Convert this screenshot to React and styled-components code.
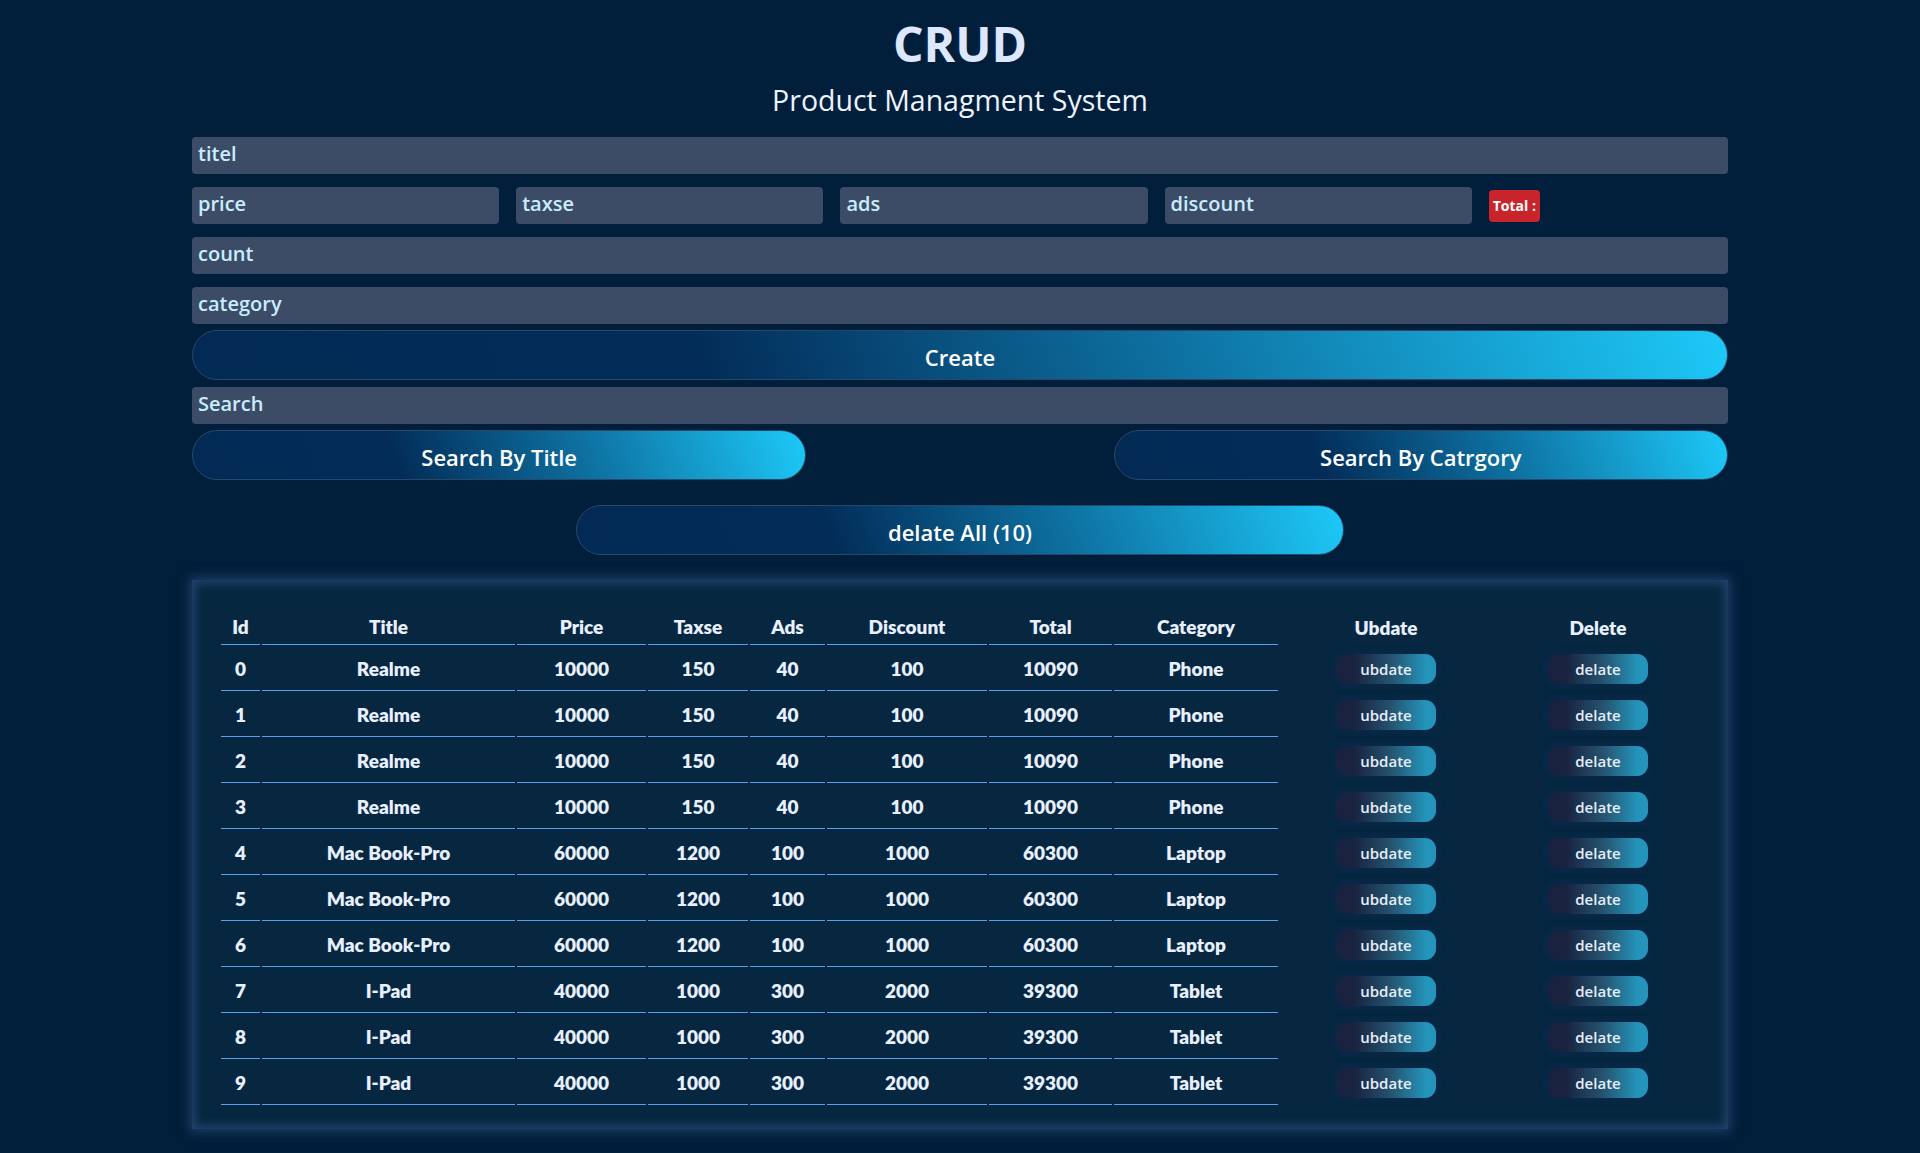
import styled, { createGlobalStyle } from "styled-components";

const GlobalStyle = createGlobalStyle`
html, body {
    margin: 0;
    padding: 0;
    background: #011f3b;
}
body {
    font-family: "Open Sans", "Noto Sans", sans-serif;
    color: #e6eeff;
}
* {
    box-sizing: border-box;
}
`;

const Page = styled.div`
width: 80%;
margin: 0 auto;
padding: 20px 0 24px;
`;

const Head = styled.div`
text-align: center;
h1 {
    margin: 0;
    font-size: 48px;
    line-height: 48px;
    font-weight: 700;
    color: #dde7ff;
}
h2 {
    margin: 18px 0 0;
    font-size: 28.5px;
    line-height: 28px;
    font-weight: 500;
    color: #eef3ff;
}
`;

const Form = styled.div`
margin-top: 23px;
display: flex;
flex-direction: column;
`;

const Field = styled.div`
height: 37px;
width: ${(p) => p.$w || "100%"};
flex-shrink: 0;
background: #3c4c66;
border-radius: 4px;
padding: 0 6px 4px;
display: flex;
align-items: center;
font-size: 20px;
font-weight: 600;
color: #c9ecff;
margin-top: ${(p) => p.$mt || 0}px;
`;

const Row = styled.div`
display: flex;
align-items: center;
gap: 17px;
margin-top: 13px;
`;

const Total = styled.span`
height: 32px;
padding: 0 4px;
display: flex;
align-items: center;
background: #c9242b;
border-radius: 4px;
font-size: 14px;
font-weight: 700;
color: #fff;
`;

const BigButton = styled.button`
display: block;
width: ${(p) => p.$w || "100%"};
height: 50px;
margin: ${(p) => p.$m || "0"};
padding: 4px 0 0;
border: 1px solid #28486b;
border-radius: 25px;
background: linear-gradient(70deg, #022a55 0%, #032c58 33%, #0e74a4 65%, #1dc9f8 100%);
font-family: "Open Sans", sans-serif;
font-size: 22px;
font-weight: 600;
color: #fff;
cursor: pointer;
`;

const SearchRow = styled.div`
display: flex;
justify-content: space-between;
margin-top: 6px;
`;

const Panel = styled.div`
margin-top: 25px;
padding: 22px 24px 22px 27px;
background: #06273f;
box-shadow: 0 0 10px 3px #1d3d64, inset 0 0 8px 4px #21416a;
`;

const Table = styled.table`
width: 1485px;
table-layout: fixed;
border-spacing: 2px;
font-family: Lato, "Open Sans", sans-serif;
font-weight: 700;
color: #e8efff;
text-align: center;
`;

const Th = styled.th`
width: ${(p) => p.$w}px;
height: 41px;
padding: 5px 0 0;
font-size: 19px;
font-weight: 800;
border-bottom: ${(p) => (p.$plain ? "none" : "1px solid #5a9df2")};
`;

const Td = styled.td`
height: 44px;
padding: 0;
font-size: 19px;
font-weight: 800;
border-bottom: ${(p) => (p.$plain ? "none" : "1px solid #5a9df2")};
`;

const SmallButton = styled.button`
width: 100px;
height: 30px;
border: none;
border-radius: 11px;
background: linear-gradient(90deg, #19233f 18%, #25536f 55%, #2494ba 90%);
box-shadow: 0 0 8px #0b2a57;
font-family: "Open Sans", sans-serif;
font-size: 15px;
font-weight: 600;
color: #e6eef8;
cursor: pointer;
`;

const products = [
    ["Realme", 10000, 150, 40, 100, 10090, "Phone"],
    ["Realme", 10000, 150, 40, 100, 10090, "Phone"],
    ["Realme", 10000, 150, 40, 100, 10090, "Phone"],
    ["Realme", 10000, 150, 40, 100, 10090, "Phone"],
    ["Mac Book-Pro", 60000, 1200, 100, 1000, 60300, "Laptop"],
    ["Mac Book-Pro", 60000, 1200, 100, 1000, 60300, "Laptop"],
    ["Mac Book-Pro", 60000, 1200, 100, 1000, 60300, "Laptop"],
    ["I-Pad", 40000, 1000, 300, 2000, 39300, "Tablet"],
    ["I-Pad", 40000, 1000, 300, 2000, 39300, "Tablet"],
    ["I-Pad", 40000, 1000, 300, 2000, 39300, "Tablet"],
];

const columns = [
    ["Id", 39],
    ["Title", 253],
    ["Price", 129],
    ["Taxse", 100],
    ["Ads", 75],
    ["Discount", 160],
    ["Total", 123],
    ["Category", 164],
];

export default function App() {
    return (
        <>
            <GlobalStyle />
            <Page>
                <Head>
                    <h1>CRUD</h1>
                    <h2>Product Managment System</h2>
                </Head>
                <Form>
                    <Field>titel</Field>
                    <Row>
                        <Field $w="20%">price</Field>
                        <Field $w="20%">taxse</Field>
                        <Field $w="20%">ads</Field>
                        <Field $w="20%">discount</Field>
                        <Total>Total :</Total>
                    </Row>
                    <Field $mt={13}>count</Field>
                    <Field $mt={13}>category</Field>
                    <BigButton $m="6px 0 0">Create</BigButton>
                    <Field $mt={7}>Search</Field>
                    <SearchRow>
                        <BigButton $w="40%">Search By Title</BigButton>
                        <BigButton $w="40%">Search By Catrgory</BigButton>
                    </SearchRow>
                    <BigButton $w="50%" $m="25px auto 0">delate All (10)</BigButton>
                </Form>
                <Panel>
                    <Table>
                        <thead>
                            <tr>
                                {columns.map(([name, w]) => (
                                    <Th key={name} $w={w}>{name}</Th>
                                ))}
                                <Th $plain $w={212}>Ubdate</Th>
                                <Th $plain $w={208}>Delete</Th>
                            </tr>
                        </thead>
                        <tbody>
                            {products.map((p, i) => (
                                <tr key={i}>
                                    <Td>{i}</Td>
                                    {p.map((v, j) => (
                                        <Td key={j}>{v}</Td>
                                    ))}
                                    <Td $plain><SmallButton>ubdate</SmallButton></Td>
                                    <Td $plain><SmallButton>delate</SmallButton></Td>
                                </tr>
                            ))}
                        </tbody>
                    </Table>
                </Panel>
            </Page>
        </>
    );
}
